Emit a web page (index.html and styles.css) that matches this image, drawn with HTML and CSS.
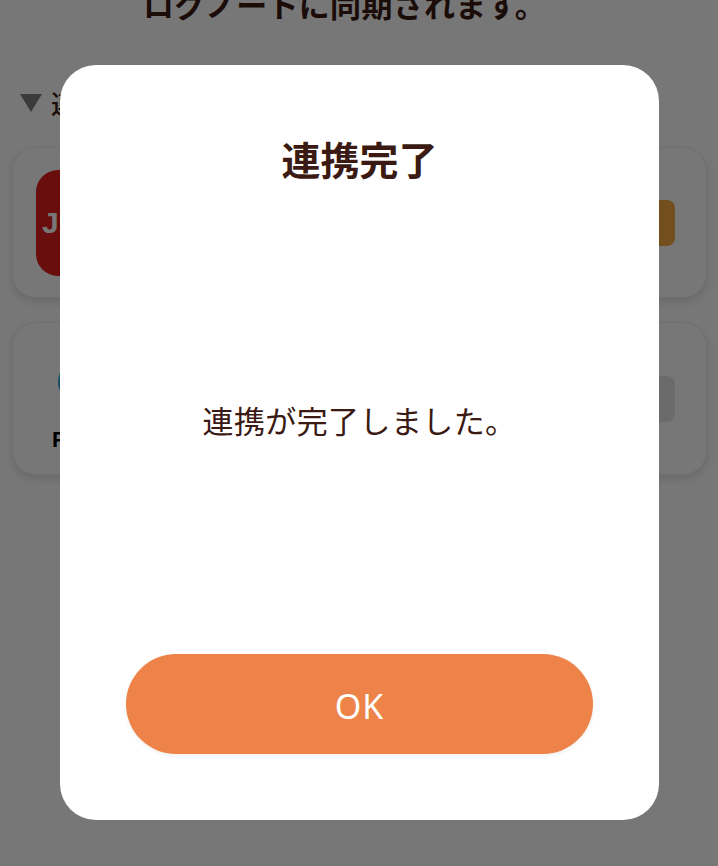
FILE: index.html
```html
<!DOCTYPE html>
<html lang="ja">
  <head>
    <meta charset="UTF-8" />
    <meta name="viewport" content="width=device-width, initial-scale=1.0" />
    <title>連携完了</title>
    <link rel="stylesheet" href="styles.css">
  </head>
  <body>
    <div class="page">
      <p class="lead">ログノートに同期されます。</p>
      <div class="section-label"><span class="arrow"></span>連携</div>
      <div class="card card-first">
        <div class="app-icon">J</div>
        <div class="link-btn link-on"></div>
      </div>
      <div class="card card-second">
        <div class="app-logo">
          <div class="logo-ring"></div>
          <div class="logo-name">F</div>
        </div>
        <div class="link-btn link-off"></div>
      </div>
    </div>
    <div class="overlay">
      <div class="modal">
        <h2 class="modal-title">連携完了</h2>
        <p class="modal-text">連携が完了しました。</p>
        <button class="ok-btn">OK</button>
      </div>
    </div>
  </body>
</html>
```

FILE: styles.css
```css
html, body {
  margin: 0;
  height: 100%;
  overflow: hidden;
}
body {
  background: #fff;
  color: #3a1a12;
  font-family: "Noto Sans CJK JP", "Noto Sans", sans-serif;
}
.page {
  padding: 0 11px 0 12px;
}
.lead {
  margin: -18px 0 0;
  padding-right: 30px;
  font-size: 31px;
  letter-spacing: 0.3px;
  line-height: 44px;
  font-weight: 700;
  text-align: center;
}
.section-label {
  display: flex;
  align-items: center;
  gap: 9px;
  margin: 59px 0 0 8px;
  font-size: 26px;
  line-height: 36px;
  font-weight: 500;
}
.arrow {
  width: 0;
  height: 0;
  border-left: 11px solid transparent;
  border-right: 11px solid transparent;
  border-top: 18px solid #7e7e7e;
}
.card {
  display: flex;
  align-items: center;
  justify-content: space-between;
  box-sizing: border-box;
  padding: 0 31px 0 23px;
  background: #fff;
  border: 1px solid #f0f0f0;
  border-radius: 24px;
  box-shadow: 0 4px 8px rgba(0, 0, 0, 0.12);
}
.card-first {
  height: 151px;
  margin-top: 26px;
}
.card-second {
  height: 153px;
  margin-top: 24px;
}
.app-icon {
  display: flex;
  align-items: center;
  width: 106px;
  height: 106px;
  padding-left: 6px;
  box-sizing: border-box;
  background: #e31c1c;
  border-radius: 22px;
  color: #fff;
  font-family: "Liberation Sans", sans-serif;
  font-size: 30px;
  font-weight: 700;
}
.link-btn {
  width: 150px;
  height: 46px;
  border-radius: 8px;
}
.link-on {
  background: #f5aa3e;
}
.link-off {
  background: #e6e6e6;
}
.app-logo {
  width: 106px;
  padding-top: 15px;
}
.logo-ring {
  width: 44px;
  height: 44px;
  margin-left: 22px;
  border: 3px solid #2f9fd0;
  border-radius: 50%;
  box-sizing: border-box;
}
.logo-name {
  margin-top: 23px;
  padding-left: 16px;
  color: #000;
  font-family: "Liberation Sans", sans-serif;
  font-size: 22px;
  line-height: 26px;
  font-weight: 700;
}
.overlay {
  position: fixed;
  inset: 0;
  background: rgba(0, 0, 0, 0.533);
}
.modal {
  position: absolute;
  left: 60px;
  top: 65px;
  display: flex;
  flex-direction: column;
  align-items: center;
  box-sizing: border-box;
  width: 599px;
  height: 755px;
  padding: 68px 66px 66px;
  background: #fff;
  border-radius: 36px;
}
.modal-title {
  margin: 0;
  font-size: 39px;
  line-height: 50px;
  font-weight: 700;
}
.modal-text {
  flex: 1;
  display: flex;
  align-items: center;
  margin: 2px 0 1px;
  font-size: 31px;
  letter-spacing: 0.4px;
  font-weight: 400;
}
.ok-btn {
  width: 467px;
  height: 100px;
  padding: 3px 0 0;
  background: #ed8348;
  border: 0;
  border-radius: 50px;
  box-shadow: 0 2px 4px rgba(0, 0, 0, 0.06);
  color: #fff;
  font-family: "Noto Sans", sans-serif;
  font-size: 34px;
  letter-spacing: 1px;
}
```
